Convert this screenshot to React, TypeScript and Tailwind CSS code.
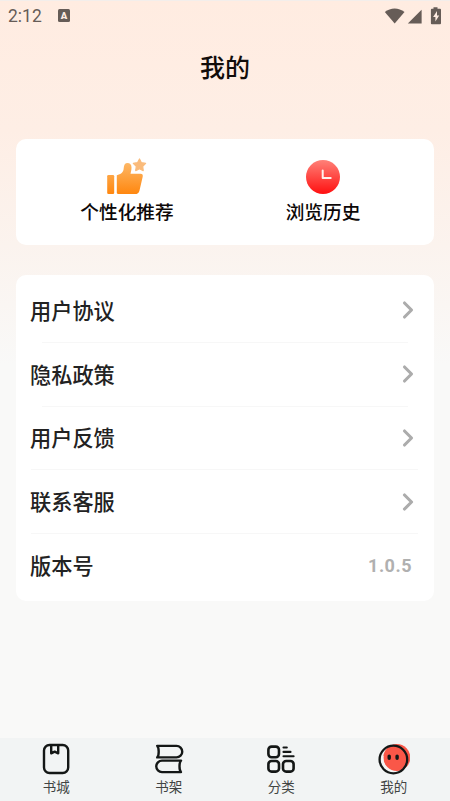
import { ChevronRight } from "lucide-react";

const menuItems = [
  { label: "用户协议", divider: "ml-[26px] mr-[10px]" },
  { label: "隐私政策", divider: "ml-[26px] mr-[10px]" },
  { label: "用户反馈", divider: "ml-[15px]" },
  { label: "联系客服", divider: "ml-[15px]" },
  { label: "版本号", value: "1.0.5" },
];

const tabs = [
  { label: "书城", icon: <StoreIcon /> },
  { label: "书架", icon: <ShelfIcon /> },
  { label: "分类", icon: <CategoryIcon /> },
  { label: "我的", icon: <MineIcon /> },
];

function StoreIcon() {
  return (
    <svg className="h-8 w-8" viewBox="0 0 32 32" fill="none" stroke="#141716" strokeWidth="2.4" strokeLinejoin="round">
      <rect x="4" y="2" width="24.2" height="28" rx="5.5" />
      <path d="M11.2 2v8.3l3.5-1.6 3.5 1.6V2" />
    </svg>
  );
}

function ShelfIcon() {
  return (
    <svg className="h-8 w-8" viewBox="0 0 32 32" fill="none" stroke="#141716" strokeWidth="2.4" strokeLinejoin="round" strokeLinecap="round">
      <path d="M4.2 2.9h19.3a5.7 5.7 0 0 1 0 11.5H4.2c2-1.8 2-9.7 0-11.5Z" />
      <path d="M28 17.6H9a5.7 5.7 0 0 0 0 11.5h19c-2-1.8-2-9.7 0-11.5Z" />
    </svg>
  );
}

function CategoryIcon() {
  return (
    <svg className="h-8 w-8" viewBox="0 0 32 32" fill="none" stroke="#141716" strokeWidth="2.6" strokeLinecap="round">
      <rect x="3.4" y="3.6" width="10.6" height="10.6" rx="3.2" />
      <rect x="3.4" y="18" width="10.6" height="10.6" rx="3.2" />
      <rect x="18" y="18" width="10.6" height="10.6" rx="3.2" />
      <path d="M18.5 4.5h3.3M18.5 8.9h7M18.500 13.2h10.100" strokeWidth="2.1" />
    </svg>
  );
}

function MineIcon() {
  return (
    <svg className="h-8 w-8" viewBox="0 0 32 32" fill="none">
      <circle cx="18.800" cy="14.500" r="13.500" fill="#fa5748" />
      <path d="M3.200 13.500c-1.500 6 2 12.500 8.300 14.600l3.500.6C8.500 26 4.500 20.500 5.600 13Z" fill="#f4f5f5" />
      <circle cx="15.400" cy="16.500" r="13.800" stroke="#141716" strokeWidth="2.300" />
      <path d="M11.200 13.100v2.200M19.100 13.100v2.200" stroke="#141716" strokeWidth="3.400" strokeLinecap="round" />
    </svg>
  );
}

function ThumbIcon() {
  return (
    <svg className="h-[38px] w-[42px]" viewBox="0 0 42 38">
      <defs>
        <linearGradient id="thumb" x1="0" y1="5" x2="0" y2="37" gradientUnits="userSpaceOnUse">
          <stop offset="0" stopColor="#fdb969" />
          <stop offset="1" stopColor="#ff870f" />
        </linearGradient>
      </defs>
      <rect x="1.200" y="18" width="7" height="19" rx="1.300" fill="url(#thumb)" />
      <path
        d="M10.800 18.200c4-.7 6.700-2.800 6.900-6.900.2-3.700 1.400-5.300 3.800-5.300 2.600 0 4 1.700 4 4.500 0 2.400-.5 4.400-1 6.200h10c2 0 2.600 1.200 2.200 3l-3.200 13.700c-.6 2.600-2.200 3.600-4.500 3.600H12.100c-1 0-1.300-.4-1.300-1.400Z"
        fill="url(#thumb)"
      />
      <path
        d="m33.500 2 1.900 3.700 4.200.7-2.900 3 .5 4.200-3.700-1.900-3.800 1.900.6-4.200-3-3 4.200-.7Z"
        fill="#fabb7b" stroke="#fabb7b" strokeWidth="1.200" strokeLinejoin="round"
      />
    </svg>
  );
}

function HistoryIcon() {
  return (
    <svg className="h-[38px] w-[38px]" viewBox="0 0 38 38">
      <defs>
        <linearGradient id="history" x1="0" y1="0" x2="0" y2="1">
          <stop offset="0" stopColor="#ff8178" />
          <stop offset="1" stopColor="#ff1010" />
        </linearGradient>
      </defs>
      <circle cx="19" cy="20" r="17" fill="url(#history)" />
      <path d="M18.700 13.500v7.400h8" fill="none" stroke="#fff0ee" strokeWidth="2" strokeLinecap="round" strokeLinejoin="round" />
    </svg>
  );
}

function StatusBar() {
  return (
    <div className="flex h-8 items-center justify-between border-t border-[#f3eeeb] px-2 text-[#665c57]">
      <div className="flex items-center">
        <span className="w-[50px] font-[Roboto] text-[17.500px] leading-none">2:12</span>
        <span className="-mt-0.5 flex h-[13px] w-3 items-center justify-center rounded-[1.500px] bg-[#665c57] font-[Roboto] text-[9.500px] font-black leading-none text-[#ffece2]">
          A
        </span>
      </div>
      <svg className="h-5 w-[58px]" viewBox="0 0 58 20" fill="#665c57">
        <path d="M.8 5C6.500.2 14.800.2 20.500 5L10.700 16.500Z" />
        <path d="M37.600 2.700v13.800H23.800Z" />
        <path d="M49.500.2h4v1.600h2.600c.6 0 .9.4.9.900v13.600c0 .6-.4.900-.9.900h-8.300c-.6 0-.9-.4-.9-.9V2.700c0-.6.4-.9.900-.9h1.700Z" />
        <path d="m53 4-3.900 6h2.300v4.600l3.800-6.200h-2.200Z" fill="#ffece2" />
      </svg>
    </div>
  );
}

export default function App() {
  return (
    <div className="flex h-[801px] w-[450px] flex-col overflow-hidden bg-[#f9f9f8] bg-[linear-gradient(180deg,#ffece1_0px,#feeee5_130px,#fbf3ee_245px,#f9f9f8_365px)] font-['Noto_Sans_CJK_SC',sans-serif]">
      <StatusBar />

      <h1 className="flex h-[68px] items-center justify-center text-[25px] font-medium leading-none text-[#120c0a]">
        我的
      </h1>

      <section className="mx-4 mt-[39px] grid h-[106px] grid-cols-2 rounded-[10px] bg-white px-[13px] pt-[18px] text-[18.700px] font-medium leading-none text-[#0d0808]">
        <div className="flex flex-col items-center gap-[7px]">
          <ThumbIcon />
          <span>个性化推荐</span>
        </div>
        <div className="flex flex-col items-center gap-[7px]">
          <HistoryIcon />
          <span>浏览历史</span>
        </div>
      </section>

      <section className="mx-4 mt-[30px] h-[326px] rounded-[10px] bg-white pl-3.5 pr-4 pt-1">
        {menuItems.map((item) => (
          <div key={item.label} className="flex h-[63.800px] flex-col">
            <div className="flex flex-1 items-center justify-between">
              <span className="-mt-0.5 text-[21.200px] font-medium leading-none text-[#222]">{item.label}</span>
              {item.value ? (
                <span className="-mt-px mr-[6px] font-[Roboto] text-[18px] font-bold leading-none tracking-[0.5px] text-[#b0b0b0]">
                  {item.value}
                </span>
              ) : (
                <ChevronRight className="-mr-1 h-7 w-7 text-[#acacac]" strokeWidth={2.700} />
              )}
            </div>
            {item.divider && <div className="-ml-3.5"><div className={`h-px bg-[#f7f7f7] ${item.divider}`} /></div>}
          </div>
        ))}
      </section>

      <nav className="mt-auto grid h-[63px] grid-cols-4 bg-[#f2f4f4] pt-[5px] text-[13.500px] leading-none text-[#414443]">
        {tabs.map((tab) => (
          <div key={tab.label} className="flex flex-col items-center gap-[5px]">
            {tab.icon}
            <span>{tab.label}</span>
          </div>
        ))}
      </nav>
    </div>
  );
}
